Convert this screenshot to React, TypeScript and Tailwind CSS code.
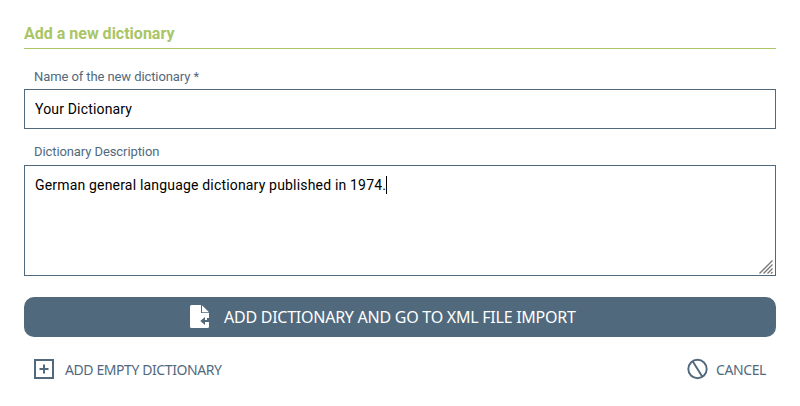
import React from "react";

function FileImportIcon() {
  return (
    <svg width="20" height="23" viewBox="0 0 20 23" className="mb-px shrink-0">
      <path fill="#fff" d="M1.5 0H11V8H19V21.5Q19 23 17.5 23H1.5Q0 23 0 21.5V1.5Q0 0 1.5 0Z" />
      <path fill="none" stroke="#51697d" strokeWidth="1" d="M11.5 0V7.5H19" />
      <path fill="#fff" d="M12 0.3L19 7.2H12Z" />
      <path fill="#51697d" d="M10.3 16L15 12V15H17V13H19V17H15V20Z" />
    </svg>
  );
}

function AddIcon() {
  return (
    <svg width="20" height="20" viewBox="0 0 20 20" fill="none" stroke="#51697d" strokeWidth="2" className="mb-px shrink-0">
      <rect x="1" y="1" width="18" height="18" />
      <path d="M10 5.5V14.5M5.5 10H14.5" />
    </svg>
  );
}

function CancelIcon() {
  return (
    <svg width="22" height="22" viewBox="0 0 22 22" fill="none" stroke="#51697d" strokeWidth="1.9" className="mb-px shrink-0">
      <circle cx="11.5" cy="11" r="9.2" />
      <path d="M6.8 3.5L16.2 18.5" />
    </svg>
  );
}

function ResizeGrip() {
  return (
    <svg width="15" height="14" viewBox="0 0 15 14" className="absolute right-px bottom-px" stroke="#777" strokeWidth="1.3">
      <path d="M0.5 13.5L13.5 0.5M4.5 13.5L13.5 4.5M8.5 13.5L13.5 8.5M12 13.5L13.5 12" />
    </svg>
  );
}

export default function App() {
  return (
    <div className="h-[406px] w-[800px] bg-white px-6 pt-[18px] font-['Roboto',sans-serif]">
      <h1 className="h-[31px] border-b border-[#a9c566] pt-px text-base leading-[30px] font-bold text-[#a9c566]">
        <span>Add a new dictionary</span>
      </h1>
      <div className="flex h-10 items-end pb-[2px] pl-[10px] text-[13px] leading-5 tracking-[-0.09px] text-[#51697d]">
        <span>Name of the new dictionary *</span>
      </div>
      <div className="flex h-10 items-center border border-[#51697d] px-[10px] text-sm tracking-[0.17px] text-black">
        <span>Your Dictionary</span>
      </div>
      <div className="flex h-9 items-end pb-[3px] pl-[10px] text-[13px] leading-5 tracking-[-0.09px] text-[#51697d]">
        <span>Dictionary Description</span>
      </div>
      <div className="relative flex h-[111px] items-start border border-[#51697d] px-[10px] pt-[10px] text-sm leading-[18px] tracking-[0.18px] text-black">
        <span>German general language dictionary published in 1974.</span>
        <i className="h-[18px] w-px bg-black" />
        <ResizeGrip />
      </div>
      <button className="mt-[21px] flex h-10 w-full items-center rounded-[10px] bg-[#51697d] pl-[166px] font-['Noto_Sans',sans-serif] text-base tracking-[-0.25px] text-white">
        <FileImportIcon />
        <span className="ml-[14px] whitespace-nowrap">ADD DICTIONARY AND GO TO XML FILE IMPORT</span>
      </button>
      <div className="mt-5 flex items-center justify-between px-[10px] font-['Noto_Sans',sans-serif] text-sm leading-6 tracking-[-0.41px] text-[#51697d]">
        <button className="flex items-center gap-[11px]">
          <AddIcon />
          <span className="pt-px">ADD EMPTY DICTIONARY</span>
        </button>
        <button className="flex items-center gap-2">
          <CancelIcon />
          <span className="pt-px">CANCEL</span>
        </button>
      </div>
    </div>
  );
}
